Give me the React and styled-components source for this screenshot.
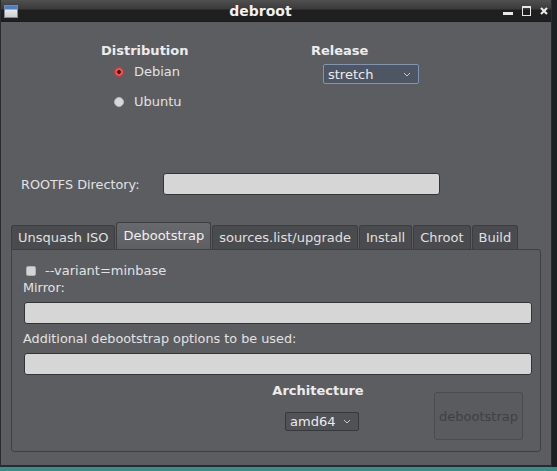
import styled, { createGlobalStyle } from "styled-components";

const GlobalStyle = createGlobalStyle`
    html, body {
        margin: 0;
        padding: 0;
        background: #1d2022;
    }
    body {
        font-family: "DejaVu Sans", "Liberation Sans", sans-serif;
        font-size: 12.8px;
        color: #e2e2e2;
    }
`;

const tabs = ["Unsquash ISO", "Debootstrap", "sources.list/upgrade", "Install", "Chroot", "Build"];

const Chevron = () => (
    <svg width="8" height="5" viewBox="0 0 8 5">
        <path d="M1 1 L4 4 L7 1" fill="none" stroke="#c8c8c8" strokeWidth="1" />
    </svg>
);

const App = () => {
    return (
        <>
            <GlobalStyle />
            <Desktop>
                <Window>
                    <TitleBar>
                        <AppIcon />
                        <Title>debroot</Title>
                        <Controls>
                            <MinBtn />
                            <MaxBtn />
                            <CloseBtn>
                                <svg width="8" height="8" viewBox="0 0 8 8">
                                    <path d="M1 1 L7 7 M7 1 L1 7" stroke="#e8e8e8" strokeWidth="2.2" />
                                </svg>
                            </CloseBtn>
                        </Controls>
                    </TitleBar>
                    <Body>
                        <TopRow>
                            <DistCol>
                                <Heading>Distribution</Heading>
                                <RadioList>
                                    <RadioRow>
                                        <Radio checked />
                                        <span>Debian</span>
                                    </RadioRow>
                                    <RadioRow>
                                        <Radio />
                                        <span>Ubuntu</span>
                                    </RadioRow>
                                </RadioList>
                            </DistCol>
                            <ReleaseCol>
                                <Heading>Release</Heading>
                                <Select focused width={96} height={20} indent={12} top={6}>
                                    <span>stretch</span>
                                    <Chevron />
                                </Select>
                            </ReleaseCol>
                        </TopRow>
                        <DirRow>
                            <DirLabel>ROOTFS Directory:</DirLabel>
                            <Input width={277} />
                        </DirRow>
                        <TabBar>
                            {tabs.map((t) => (
                                <Tab key={t} active={t === "Debootstrap"}>
                                    {t}
                                </Tab>
                            ))}
                        </TabBar>
                        <Pane>
                            <CheckRow>
                                <CheckBox />
                                <span>--variant=minbase</span>
                            </CheckRow>
                            <FieldLabel top={2}>Mirror:</FieldLabel>
                            <Input width={508} />
                            <FieldLabel top={7}>Additional debootstrap options to be used:</FieldLabel>
                            <Input width={508} />
                            <BottomRow>
                                <ArchCol>
                                    <Heading>Architecture</Heading>
                                    <Select width={74} height={19} top={14} indent={8}>
                                        <span>amd64</span>
                                        <Chevron />
                                    </Select>
                                </ArchCol>
                                <ActionButton disabled>debootstrap</ActionButton>
                            </BottomRow>
                        </Pane>
                    </Body>
                </Window>
                <Strip />
            </Desktop>
        </>
    );
};

export default App;

const Desktop = styled.div`
    width: 557px;
    height: 471px;
    overflow: hidden;
    display: flex;
    flex-direction: column;
`;

const Window = styled.div`
    width: 552px;
    height: 467px;
    box-sizing: border-box;
    border-left: 1px solid #2a2b2d;
    border-right: 1px solid #2a2b2d;
    border-bottom: 2px solid #2a2b2d;
    background: #5c5d61;
    display: flex;
    flex-direction: column;
`;

const Strip = styled.div`
    height: 4px;
    background: #3b8d8c;
`;

const TitleBar = styled.div`
    height: 22px;
    flex-shrink: 0;
    display: flex;
    align-items: center;
    background: linear-gradient(to bottom, #505050 0px, #3a3a3a 9px, #1f1f1f 10px, #1f1f1f 21px, #171717 22px);
    padding: 0 3px 0 3px;
`;

const AppIcon = styled.div`
    width: 14px;
    height: 13px;
    background: linear-gradient(to bottom, #4d7fc4 0px, #4d7fc4 3px, #e8e8e8 4px, #c8c8c8 13px);
    border: 1px solid #7a8aa0;
    box-sizing: border-box;
`;

const Title = styled.div`
    flex: 1;
    text-align: center;
    font-weight: bold;
    font-size: 14px;
    color: #f0f0f0;
`;

const Controls = styled.div`
    display: flex;
    align-items: center;
    gap: 9px;
`;

const MinBtn = styled.div`
    width: 10px;
    height: 3px;
    margin-top: 5px;
    background: #e8e8e8;
`;

const MaxBtn = styled.div`
    width: 7px;
    height: 7px;
    border: 1px solid #e8e8e8;
    border-top-width: 2px;
`;

const CloseBtn = styled.div`
    display: flex;
`;

const Body = styled.div`
    flex: 1;
    display: flex;
    flex-direction: column;
`;

const TopRow = styled.div`
    display: flex;
    margin-top: 21px;
    padding-left: 100px;
`;

const Heading = styled.div`
    font-weight: bold;
    font-size: 13px;
    line-height: 15px;
    color: #ececec;
    white-space: nowrap;
`;

const DistCol = styled.div`
    width: 210px;
`;

const RadioList = styled.div`
    display: flex;
    flex-direction: column;
    gap: 15px;
    margin-top: 6px;
    padding-left: 13px;
`;

const RadioRow = styled.div`
    display: flex;
    align-items: center;
    gap: 10px;
    line-height: 15px;
    font-size: 13px;
`;

const Radio = styled.div`
    width: 10px;
    height: 10px;
    border-radius: 50%;
    box-sizing: border-box;
    background: ${(p) => (p.checked ? "radial-gradient(circle, #5a1010 0 1.6px, #f05a5a 2.2px, #e84848 4px, #b83030 5px)" : "#d8d8d8")};
    border: 1px solid ${(p) => (p.checked ? "#c04040" : "#b8b8b8")};
`;

const ReleaseCol = styled.div`
    display: flex;
    flex-direction: column;
`;

const Select = styled.div`
    width: ${(p) => p.width}px;
    height: ${(p) => p.height}px;
    box-sizing: border-box;
    margin-top: ${(p) => p.top}px;
    margin-left: ${(p) => p.indent || 0}px;
    padding: 0 7px 0 4px;
    display: flex;
    align-items: center;
    justify-content: space-between;
    border-radius: 2px;
    background: ${(p) => (p.focused ? "#4f5663" : "#515256")};
    border: 1px solid ${(p) => (p.focused ? "#7f95b3" : "#37383b")};
    color: #ececec;
    font-size: 13px;
`;

const DirRow = styled.div`
    display: flex;
    align-items: center;
    margin-top: 64px;
    padding-left: 20px;
`;

const DirLabel = styled.div`
    width: 142px;
    color: #e2e2e2;
`;

const Input = styled.div`
    width: ${(p) => p.width}px;
    height: 22px;
    flex-shrink: 0;
    box-sizing: border-box;
    background: #d6d6d6;
    border: 1px solid #333436;
    border-radius: 3px;
`;

const TabBar = styled.div`
    display: flex;
    align-items: flex-end;
    margin-top: 27px;
    padding-left: 10px;
    gap: 1px;
`;

const Tab = styled.div`
    height: ${(p) => (p.active ? 27 : 24)}px;
    box-sizing: border-box;
    padding: 0 6px;
    display: flex;
    align-items: center;
    padding-bottom: ${(p) => (p.active ? 2 : 0)}px;
    white-space: nowrap;
    font-size: 13px;
    color: ${(p) => (p.active ? "#f0f0f0" : "#e0e0e0")};
    background: ${(p) => (p.active ? "linear-gradient(to bottom, #68696d, #5e5f63)" : "#4a4b4f")};
    border: 1px solid #3c3d40;
    border-bottom: none;
    border-radius: 3px 3px 0 0;
`;

const Pane = styled.div`
    margin-left: 10px;
    width: 530px;
    height: 203px;
    box-sizing: border-box;
    border: 1px solid #3f4044;
    border-radius: 0 3px 3px 3px;
    padding: 13px 8px 0 12px;
    display: flex;
    flex-direction: column;
`;

const CheckRow = styled.div`
    display: flex;
    align-items: center;
    gap: 9px;
    padding-left: 2px;
    line-height: 15px;
    font-size: 13px;
`;

const CheckBox = styled.div`
    width: 10px;
    height: 10px;
    background: #d4d4d4;
    border: 1px solid #b0b0b0;
    box-sizing: border-box;
    border-radius: 2px;
`;

const FieldLabel = styled.div`
    line-height: 15px;
    margin: ${(p) => p.top}px 0 7px -1px;
    color: #e2e2e2;
`;

const BottomRow = styled.div`
    display: flex;
    align-items: flex-start;
    margin-top: 8px;
    padding-left: 246px;
`;

const ArchCol = styled.div`
    width: 96px;
    display: flex;
    flex-direction: column;
    align-items: center;
`;

const ActionButton = styled.button`
    margin-left: 68px;
    margin-top: 9px;
    width: 89px;
    height: 48px;
    border-radius: 3px;
    background: #5a5b5f;
    border: 1px solid #4a4b4f;
    color: #3f4044;
    font-family: "DejaVu Sans", "Liberation Sans", sans-serif;
    font-size: 13px;
    padding: 0;
`;
